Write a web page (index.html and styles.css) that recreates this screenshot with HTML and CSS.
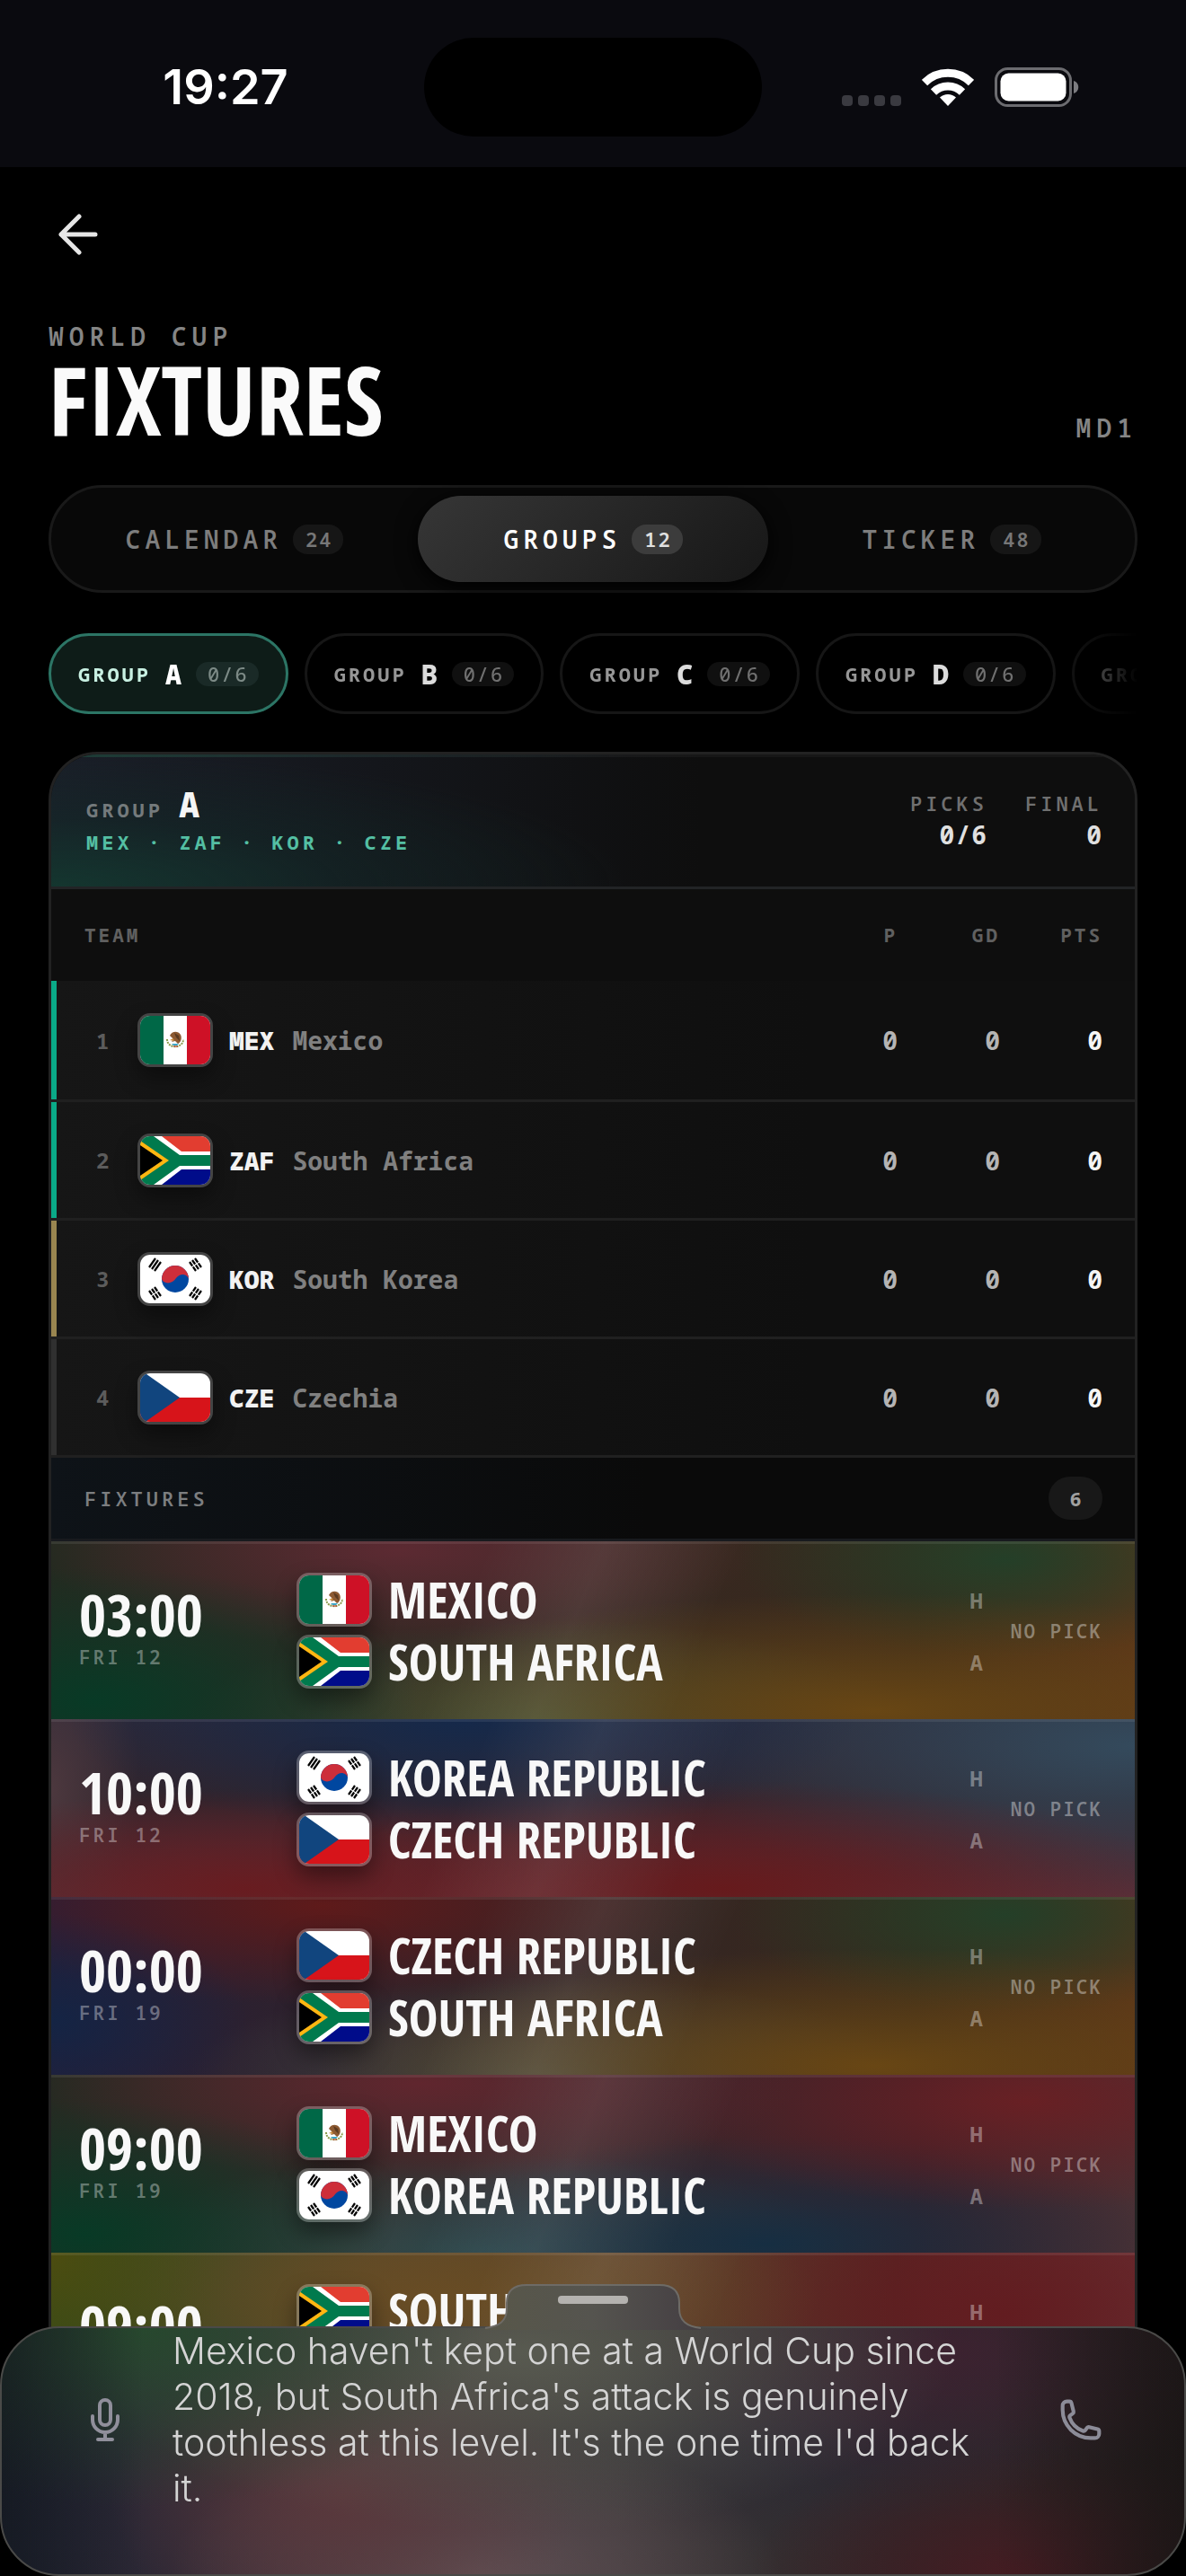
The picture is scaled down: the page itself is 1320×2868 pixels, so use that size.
FILE: index.html
```html
<!DOCTYPE html>
<html lang="en">
<head>
    <meta charset="UTF-8">
    <meta name="viewport" content="width=device-width, initial-scale=1.0">
    <title>World Cup Fixtures</title>
    <link rel="stylesheet" href="styles.css">
</head>
<body>
    <!-- flag and emblem shapes, reused below -->
    <svg class="defs" aria-hidden="true">
        <symbol id="flag-mex" viewBox="0 0 78 54" preserveAspectRatio="none">
            <rect width="78" height="54" fill="#fff"/>
            <rect width="26" height="54" fill="#006847"/>
            <rect x="52" width="26" height="54" fill="#ce1126"/>
            <path d="M30 26c0 11 18 11 18 0" fill="none" stroke="#8a9a4a" stroke-width="2" stroke-dasharray="2 1"/>
            <path d="M33 22c2-5 9-6 12-1 2 4 0 9-3 10l-3-3-4 1c2-2 2-4 0-5z" fill="#8c5a32"/>
            <path d="M38 19l5 3 1 6-4-4z" fill="#5a3a20"/>
            <path d="M35 31h8l-2 2h-4z" fill="#3aa6c8"/>
            <path d="M33 27l4-2 1 3z" fill="#c98a3a"/>
            <path d="M37 34h5" stroke="#c0392b" stroke-width="1"/>
        </symbol>
        <symbol id="flag-zaf" viewBox="0 0 78 54" preserveAspectRatio="none">
            <rect width="78" height="54" fill="#fff"/>
            <path d="M24 0h54v17H46z" fill="#e23d30"/>
            <path d="M24 54h54V37H46z" fill="#000c8a"/>
            <path d="M0 0h15l29 21h34v12H44L15 54H0z" fill="#007a4d"/>
            <path d="M0 5l32 22L0 49z" fill="#ffb612"/>
            <path d="M0 10l25 17L0 44z" fill="#000"/>
        </symbol>
        <symbol id="flag-kor" viewBox="0 0 78 54" preserveAspectRatio="none">
            <rect width="78" height="54" fill="#fff"/>
            <circle cx="39" cy="27" r="15" fill="#0047a0"/>
            <path d="M24 27a15 15 0 0 1 30 0c-1-5-9-8-14-1-4 7-14 7-16 1z" fill="#cd2e3a"/>
            <g stroke="#000" stroke-width="2.200" fill="none">
                <path d="M10 14l7-10M13 16l7-10M16 18l7-10"/>
                <path d="M61 4l7 10M58 6l7 10M55 8l7 10" stroke-dasharray="5.500 1.200"/>
                <path d="M10 40l7 10M13 38l7 10M16 36l7 10" stroke-dasharray="5.500 1.200"/>
                <path d="M61 50l7-10M58 48l7-10M55 46l7-10" stroke-dasharray="5.500 1.200"/>
            </g>
        </symbol>
        <symbol id="flag-cze" viewBox="0 0 78 54" preserveAspectRatio="none">
            <rect width="78" height="54" fill="#fff"/>
            <rect y="27" width="78" height="27" fill="#d7141a"/>
            <path d="M0-4l44 31L0 58z" fill="#11457e"/>
        </symbol>
    </svg>

    <div class="status-bar">
        <span class="status-time">19:27</span>
        <span class="island"></span>
        <div class="status-icons">
            <svg width="66" height="44" viewBox="0 0 66 44" fill="#3a3a40">
                <rect y="31" width="12" height="12" rx="4"/>
                <rect x="18" y="31" width="12" height="12" rx="4"/>
                <rect x="36" y="31" width="12" height="12" rx="4"/>
                <rect x="54" y="31" width="12" height="12" rx="4"/>
            </svg>
            <svg class="wifi" width="58" height="44" viewBox="0 0 58 44" fill="none" stroke="#fff" stroke-width="9">
                <path d="M3 17a37 37 0 0 1 52 0"/>
                <path d="M13 27.500a23 23 0 0 1 32 0"/>
                <path d="M29 43l-9-9.500a13 13 0 0 1 18 0z" fill="#fff" stroke="none"/>
            </svg>
            <svg width="94" height="44" viewBox="0 0 94 44">
                <rect x="1.500" y="1.500" width="83" height="41" rx="13" fill="none" stroke="#6c6c70" stroke-width="3"/>
                <rect x="6.500" y="6.500" width="73" height="31" rx="9" fill="#fff"/>
                <path d="M88 15c7 2 7 12 0 14z" fill="#7c7c80"/>
            </svg>
        </div>
    </div>

    <main class="page">
        <button class="back" aria-label="Back">
            <svg width="44" height="46" viewBox="0 0 44 46" fill="none" stroke="#e6e6e6" stroke-width="5" stroke-linecap="round" stroke-linejoin="round">
                <path d="M41 23H3M23 3L3 23l20 20"/>
            </svg>
        </button>

        <header class="page-head">
            <div>
                <p class="eyebrow">WORLD CUP</p>
                <h1>FIXTURES</h1>
            </div>
            <span class="matchday">MD1</span>
        </header>

        <nav class="tabs">
            <button class="tab">CALENDAR <span class="count">24</span></button>
            <button class="tab active">GROUPS <span class="count">12</span></button>
            <button class="tab">TICKER <span class="count">48</span></button>
        </nav>

        <div class="chips">
            <button class="chip active">GROUP <b>A</b> <span class="chip-count">0/6</span></button>
            <button class="chip">GROUP <b>B</b> <span class="chip-count">0/6</span></button>
            <button class="chip">GROUP <b>C</b> <span class="chip-count">0/6</span></button>
            <button class="chip">GROUP <b>D</b> <span class="chip-count">0/6</span></button>
            <button class="chip">GROUP <b>E</b> <span class="chip-count">0/6</span></button>
        </div>

        <section class="card">
            <div class="card-head">
                <div>
                    <h2>GROUP <b>A</b></h2>
                    <p class="codes">MEX · ZAF · KOR · CZE</p>
                </div>
                <dl class="stats">
                    <div><dt>PICKS</dt><dd>0/6</dd></div>
                    <div><dt>FINAL</dt><dd>0</dd></div>
                </dl>
            </div>

            <table class="standings">
                <thead>
                    <tr><th class="team-head" colspan="2">TEAM</th><th class="num">P</th><th class="num">GD</th><th class="num last">PTS</th></tr>
                </thead>
                <tbody>
                    <tr class="through">
                        <td class="rank">1</td>
                        <td><div class="team"><svg class="flag"><use href="#flag-mex"/></svg><b>MEX</b><span>Mexico</span></div></td>
                        <td class="num">0</td><td class="num">0</td><td class="num last">0</td>
                    </tr>
                    <tr class="through">
                        <td class="rank">2</td>
                        <td><div class="team"><svg class="flag"><use href="#flag-zaf"/></svg><b>ZAF</b><span>South Africa</span></div></td>
                        <td class="num">0</td><td class="num">0</td><td class="num last">0</td>
                    </tr>
                    <tr class="playoff">
                        <td class="rank">3</td>
                        <td><div class="team"><svg class="flag"><use href="#flag-kor"/></svg><b>KOR</b><span>South Korea</span></div></td>
                        <td class="num">0</td><td class="num">0</td><td class="num last">0</td>
                    </tr>
                    <tr>
                        <td class="rank">4</td>
                        <td><div class="team"><svg class="flag"><use href="#flag-cze"/></svg><b>CZE</b><span>Czechia</span></div></td>
                        <td class="num">0</td><td class="num">0</td><td class="num last">0</td>
                    </tr>
                </tbody>
            </table>

            <div class="fixtures-head">
                <h3>FIXTURES</h3>
                <span class="total">6</span>
            </div>

            <ul class="fixtures">
                <li class="fixture mex-zaf">
                    <div class="kickoff"><time>03:00</time><span>FRI 12</span></div>
                    <div class="sides">
                        <div class="side"><svg class="flag"><use href="#flag-mex"/></svg>MEXICO</div>
                        <div class="side"><svg class="flag"><use href="#flag-zaf"/></svg>SOUTH AFRICA</div>
                    </div>
                    <div class="home-away"><span>H</span><span>A</span></div>
                    <span class="pick">NO PICK</span>
                </li>
                <li class="fixture kor-cze">
                    <div class="kickoff"><time>10:00</time><span>FRI 12</span></div>
                    <div class="sides">
                        <div class="side"><svg class="flag"><use href="#flag-kor"/></svg>KOREA REPUBLIC</div>
                        <div class="side"><svg class="flag"><use href="#flag-cze"/></svg>CZECH REPUBLIC</div>
                    </div>
                    <div class="home-away"><span>H</span><span>A</span></div>
                    <span class="pick">NO PICK</span>
                </li>
                <li class="fixture cze-zaf">
                    <div class="kickoff"><time>00:00</time><span>FRI 19</span></div>
                    <div class="sides">
                        <div class="side"><svg class="flag"><use href="#flag-cze"/></svg>CZECH REPUBLIC</div>
                        <div class="side"><svg class="flag"><use href="#flag-zaf"/></svg>SOUTH AFRICA</div>
                    </div>
                    <div class="home-away"><span>H</span><span>A</span></div>
                    <span class="pick">NO PICK</span>
                </li>
                <li class="fixture mex-kor">
                    <div class="kickoff"><time>09:00</time><span>FRI 19</span></div>
                    <div class="sides">
                        <div class="side"><svg class="flag"><use href="#flag-mex"/></svg>MEXICO</div>
                        <div class="side"><svg class="flag"><use href="#flag-kor"/></svg>KOREA REPUBLIC</div>
                    </div>
                    <div class="home-away"><span>H</span><span>A</span></div>
                    <span class="pick">NO PICK</span>
                </li>
                <li class="fixture zaf-kor">
                    <div class="kickoff"><time>09:00</time><span>THU 25</span></div>
                    <div class="sides">
                        <div class="side"><svg class="flag"><use href="#flag-zaf"/></svg>SOUTH AFRICA</div>
                        <div class="side"><svg class="flag"><use href="#flag-kor"/></svg>KOREA REPUBLIC</div>
                    </div>
                    <div class="home-away"><span>H</span><span>A</span></div>
                    <span class="pick">NO PICK</span>
                </li>
            </ul>
        </section>
    </main>

    <div class="sheet">
        <button class="handle" aria-label="Expand">
            <svg width="240" height="52" viewBox="0 0 240 52">
                <defs>
                    <linearGradient id="tabfill" x1="0" x2="1">
                        <stop offset="0" stop-color="#585749"/>
                        <stop offset=".5" stop-color="#55544f"/>
                        <stop offset="1" stop-color="#443e42"/>
                    </linearGradient>
                </defs>
                <path d="M0 52V50C16 48 24 42 24 28V22C24 8 32 2 46 2H194C208 2 216 8 216 22V28C216 42 224 48 240 50V52Z" fill="url(#tabfill)"/>
                <path d="M0 50C16 48 24 42 24 28V22C24 8 32 2 46 2H194C208 2 216 8 216 22V28C216 42 224 48 240 50" fill="none" stroke="#6e6b66" stroke-width="2"/>
                <rect x="81" y="14" width="78" height="9" rx="4" fill="#b4b2af"/>
            </svg>
        </button>
        <button class="sheet-btn" aria-label="Microphone">
            <svg width="60" height="60" viewBox="0 0 60 60" fill="none" stroke="#908f9b" stroke-width="4" stroke-linecap="round">
                <rect x="24" y="8" width="12" height="28" rx="6"/>
                <path d="M16 26v4a14 14 0 0 0 28 0v-4M30 44v8M22 52h16"/>
            </svg>
        </button>
        <p class="message">Mexico haven't kept one at a World Cup since 2018, but South Africa's attack is genuinely toothless at this level. It's the one time I'd back it.</p>
        <button class="sheet-btn" aria-label="Call">
            <svg width="50" height="50" viewBox="0 0 24 24" fill="none" stroke="#8c8c98" stroke-width="2" stroke-linejoin="round">
                <path d="M2.250 6.750c0 8.284 6.716 15 15 15h2.250a2.250 2.250 0 0 0 2.250-2.250v-1.372c0-.516-.351-.966-.852-1.091l-4.423-1.106c-.44-.11-.902.055-1.173.417l-.97 1.293c-.282.376-.769.542-1.210.38a12.035 12.035 0 0 1-7.143-7.143c-.162-.441.004-.928.38-1.210l1.293-.97c.363-.271.527-.734.417-1.173L6.963 3.102a1.125 1.125 0 0 0-1.091-.852H4.500A2.250 2.250 0 0 0 2.250 4.500z"/>
            </svg>
        </button>
    </div>
</body>
</html>
```
FILE: styles.css
```css
* {
    box-sizing: border-box;
    margin: 0;
    padding: 0;
}
body {
    height: 100vh;
    overflow: hidden;
    background: #000;
    color: #fff;
    font-family: "Noto Sans Mono", "DejaVu Sans Mono", monospace;
    font-weight: 700;
}
button {
    background: none;
    border: none;
    color: inherit;
    font: inherit;
    cursor: pointer;
}
svg {
    display: block;
}
.defs {
    position: absolute;
    width: 0;
    height: 0;
}

/* status bar */
.status-bar {
    display: grid;
    grid-template-columns: 1fr 376px 1fr;
    align-items: center;
    height: 186px;
    padding-top: 8px;
    background: #0a0a0f;
}
.status-time {
    padding-left: 30px;
    text-align: center;
    font: 600 54px/60px Inter, sans-serif;
}
.island {
    height: 110px;
    border-radius: 55px;
    background: #000;
}
.status-icons {
    display: flex;
    gap: 23px;
    padding-left: 89px;
}

/* page head */
.page {
    padding: 0 54px;
}
.back {
    display: flex;
    align-items: center;
    height: 60px;
    margin-top: 45px;
    padding: 0 11px;
}
.page-head {
    display: flex;
    justify-content: space-between;
    align-items: flex-end;
    margin-top: 65px;
}
.eyebrow,
.matchday {
    color: #858585;
    font-size: 28px;
    font-weight: 600;
    line-height: 36px;
    letter-spacing: 6px;
}
.matchday {
    line-height: 40px;
}
h1 {
    font: 700 106px/104px "Open Sans Condensed", "Roboto Condensed", "Open Sans", sans-serif;
    color: #fafafa;
}

/* tabs */
.tabs {
    display: grid;
    grid-template-columns: repeat(3, 1fr);
    gap: 9px;
    margin-top: 44px;
    padding: 9px;
    border: 3px solid #191919;
    border-radius: 60px;
    background: #080808;
}
.tab {
    display: flex;
    align-items: center;
    justify-content: center;
    gap: 12px;
    height: 96px;
    border-radius: 48px;
    color: #7d7d7d;
    font-size: 28px;
    font-weight: 600;
    letter-spacing: 5px;
}
.tab.active {
    background: linear-gradient(135deg, #363636, #171717);
    box-shadow: 0 6px 24px #000;
    color: #fff;
}
.count {
    padding: 0 12px 0 14px;
    border-radius: 16px;
    background: #161616;
    color: #777;
    font-size: 22px;
    line-height: 33px;
    letter-spacing: 2px;
}
.active .count {
    background: #3c3c3c;
    color: #e0e0e0;
}

/* group chips */
.chips {
    display: flex;
    gap: 18px;
    margin-top: 45px;
    overflow: hidden;
    -webkit-mask-image: linear-gradient(90deg, #000 92%, transparent);
    mask-image: linear-gradient(90deg, #000 92%, transparent);
}
.chip {
    display: flex;
    flex: none;
    align-items: center;
    height: 90px;
    padding: 0 30px;
    border: 3px solid #161616;
    border-radius: 45px;
    color: #969696;
    font-size: 22px;
    letter-spacing: 3px;
}
.chip b {
    margin: 0 16px;
    color: #dcdcdc;
    font-size: 30px;
    letter-spacing: 0;
}
.chip.active {
    border-color: #2c7565;
    background: #0e1c18;
    color: #c8f0e2;
}
.chip.active b {
    color: #fff;
}
.chip-count {
    padding: 0 11px 0 13px;
    border-radius: 14px;
    background: #101010;
    color: #707070;
    font-size: 22px;
    font-weight: 500;
    line-height: 27px;
    letter-spacing: 2px;
}
.active .chip-count {
    background: #1a2a27;
    color: #7c8a86;
}

/* group card */
.card {
    margin-top: 42px;
    border: 3px solid #222;
    border-radius: 54px;
    background: #0e0e0e;
    overflow: hidden;
}
.card-head {
    display: flex;
    justify-content: space-between;
    align-items: center;
    height: 150px;
    padding: 0 36px 4px 39px;
    border-top: 3px solid rgba(255, 255, 255, 0.04);
    border-bottom: 3px solid #222426;
    background:
        radial-gradient(ellipse 640px 150px at 0 100%, #14362f, rgba(18, 42, 40, 0.5) 50%, transparent),
        linear-gradient(90deg, #1a1e28, #0e0e0e 60%);
}
h2 {
    color: #747a7c;
    font-size: 22px;
    letter-spacing: 4px;
    line-height: 42px;
}
h2 b {
    color: #f5f5f5;
    font-size: 38px;
    letter-spacing: 0;
}
.codes {
    color: #54bfa3;
    font-size: 22px;
    line-height: 30px;
    letter-spacing: 4px;
}
.stats {
    display: flex;
    gap: 42px;
    text-align: right;
}
.stats dt {
    color: #707070;
    font-size: 22px;
    font-weight: 600;
    line-height: 32px;
    letter-spacing: 4px;
}
.stats dd {
    color: #e0e0e0;
    font-size: 28px;
    line-height: 38px;
    letter-spacing: 1px;
}

/* standings */
.standings {
    width: 100%;
    border-spacing: 0;
}
.standings th {
    height: 102px;
    color: #606060;
    font-size: 21px;
    letter-spacing: 3px;
}
.standings .team-head {
    padding-left: 37px;
    text-align: left;
}
.standings tbody tr {
    background: linear-gradient(90deg, #161616, #0f0f0f 70%);
    box-shadow: inset 6px 0 #303030;
}
.standings tbody .through {
    box-shadow: inset 6px 0 #0aaa88;
}
.standings tbody .playoff {
    box-shadow: inset 6px 0 #9a8650;
}
.standings td {
    height: 132px;
    border-bottom: 3px solid #202020;
}
.standings tbody tr:first-child td {
    height: 135px;
}
.rank {
    width: 96px;
    padding-left: 50px;
    color: #5c5c5c;
    font-size: 24px;
}
.team {
    display: flex;
    align-items: center;
    color: #808080;
    font-size: 28px;
}
.team b {
    margin: 0 20px 0 18px;
    color: #f2f2f2;
}
.flag {
    width: 84px;
    height: 60px;
    border: 3px solid #444;
    border-radius: 14px;
    box-shadow: 0 12px 24px rgba(0, 0, 0, 0.4);
}
.standings .num {
    width: 114px;
    text-align: right;
}
.standings .last {
    width: 150px;
    padding-right: 36px;
}
td.num {
    color: #b4b4b4;
    font-size: 28px;
}
td.last {
    color: #f5f5f5;
}

/* fixtures */
.fixtures-head {
    display: flex;
    justify-content: space-between;
    align-items: center;
    height: 93px;
    padding: 0 36px 0 37px;
    border-bottom: 3px solid #181a1e;
    background: linear-gradient(90deg, #0e1318, #0a0a0a 55%);
}
h3 {
    color: #7c7e80;
    font-size: 22px;
    font-weight: 600;
    letter-spacing: 4px;
}
.total {
    width: 60px;
    border-radius: 24px;
    background: #181818;
    color: #a0a0a0;
    font-size: 22px;
    line-height: 48px;
    text-align: center;
}
.fixtures {
    list-style: none;
}
.fixture {
    display: flex;
    align-items: center;
    height: 198px;
    padding: 0 36px 2px 31px;
    border-top: 3px solid rgba(255, 255, 255, 0.08);
    background-origin: border-box;
}
.kickoff {
    width: 242px;
    padding-bottom: 8px;
}
.kickoff time {
    display: block;
    font: 700 65px/66px "Open Sans Condensed", "Roboto Condensed", "Open Sans", sans-serif;
    color: #f8f8f8;
}
.kickoff span {
    display: block;
    color: rgba(255, 255, 255, 0.36);
    font-size: 21px;
    font-weight: 600;
    line-height: 30px;
    letter-spacing: 3px;
}
.sides,
.home-away {
    display: grid;
    grid-template-rows: 60px 60px;
    gap: 9px;
    align-items: center;
}
.sides {
    flex: 1;
}
.side {
    display: flex;
    align-items: center;
    gap: 18px;
    font: 700 55px/60px "Open Sans Condensed", "Roboto Condensed", "Open Sans", sans-serif;
    color: #f8f8f8;
}
.side .flag {
    border-color: rgba(255, 255, 255, 0.25);
}
.home-away {
    margin-right: 31px;
    color: rgba(255, 255, 255, 0.36);
    font-size: 24px;
}
.pick {
    color: rgba(255, 255, 255, 0.38);
    font-size: 21px;
    font-weight: 600;
    letter-spacing: 2px;
}

/* blurred flag colours behind each fixture */
.mex-zaf {
    background-image:
        linear-gradient(112deg, transparent 38%, rgba(255, 255, 255, 0.08) 48%, transparent 60%),
        radial-gradient(ellipse 360px 150px at 4% 90%, #083a26, transparent),
        radial-gradient(ellipse 400px 110px at 32% 5%, #5c2a32, transparent),
        radial-gradient(ellipse 620px 130px at 76% 95%, #684614, transparent),
        radial-gradient(ellipse 300px 110px at 88% 10%, #243f28, transparent),
        radial-gradient(ellipse 400px 110px at 46% 100%, #3a5038, transparent),
        linear-gradient(90deg, #242a20, #362824 40%, #38291c 80%, #58341a);
}
.kor-cze {
    background-image:
        linear-gradient(112deg, transparent 38%, rgba(255, 255, 255, 0.08) 48%, transparent 60%),
        radial-gradient(ellipse 440px 130px at 38% 0, #15294a, transparent),
        radial-gradient(ellipse 420px 110px at 18% 95%, #681c20, transparent),
        radial-gradient(ellipse 520px 120px at 62% 95%, #661a1c, transparent),
        radial-gradient(ellipse 560px 170px at 100% 15%, #344a5c, transparent),
        radial-gradient(ellipse 100px 200px at 0 40%, #4c383e, transparent),
        linear-gradient(180deg, #2c2838, #30242c 45%, #58303a);
}
.cze-zaf {
    background-image:
        linear-gradient(112deg, transparent 38%, rgba(255, 255, 255, 0.08) 48%, transparent 60%),
        radial-gradient(ellipse 220px 120px at 0 70%, #142444, transparent),
        radial-gradient(ellipse 420px 110px at 25% 5%, #5e1a1a, transparent),
        radial-gradient(ellipse 620px 130px at 76% 95%, #684614, transparent),
        radial-gradient(ellipse 300px 110px at 88% 10%, #243f28, transparent),
        radial-gradient(ellipse 400px 110px at 46% 100%, #444a46, transparent),
        linear-gradient(90deg, #261e38, #30222a 30%, #38291c 80%, #58341a);
}
.mex-kor {
    background-image:
        linear-gradient(112deg, transparent 38%, rgba(255, 255, 255, 0.08) 48%, transparent 60%),
        radial-gradient(ellipse 340px 150px at 3% 90%, #083a26, transparent),
        radial-gradient(ellipse 420px 110px at 34% 5%, #60262e, transparent),
        radial-gradient(ellipse 420px 120px at 90% 15%, #682024, transparent),
        radial-gradient(ellipse 460px 120px at 66% 95%, #162e42, transparent),
        radial-gradient(ellipse 420px 110px at 40% 100%, #34504e, transparent),
        linear-gradient(90deg, #262a22, #3c2a2c 40%, #3a2028 80%, #4a3034);
}
.zaf-kor {
    background-image:
        linear-gradient(112deg, transparent 38%, rgba(255, 255, 255, 0.08) 48%, transparent 60%),
        radial-gradient(ellipse 200px 200px at 0 0, #4c4c10, transparent),
        radial-gradient(ellipse 420px 130px at 36% 25%, #684c24, transparent),
        radial-gradient(ellipse 320px 180px at 88% 35%, #621c20, transparent),
        linear-gradient(90deg, #2c4a1c, #58482a 30%, #5e402c 55%, #562422 78%, #682e32);
}

/* bottom sheet */
.sheet {
    position: fixed;
    left: 0;
    right: 0;
    bottom: 0;
    display: flex;
    justify-content: space-between;
    align-items: center;
    gap: 45px;
    padding: 0 85px 70px;
    border: 2px solid #4a4a48;
    border-radius: 66px;
    background:
        linear-gradient(90deg, rgba(16, 20, 24, 0.6), transparent 12%, transparent 84%, rgba(24, 20, 20, 0.8)),
        radial-gradient(ellipse 380px 200px at 12% 0, #27482e, transparent),
        radial-gradient(ellipse 480px 200px at 44% 10%, #585a50, transparent),
        radial-gradient(ellipse 260px 180px at 29% 68%, #5a383c, transparent),
        radial-gradient(ellipse 340px 160px at 40% 100%, #605054, transparent),
        radial-gradient(ellipse 340px 160px at 80% 10%, #3c2230, transparent),
        radial-gradient(ellipse 300px 140px at 86% 100%, #451c22, transparent),
        radial-gradient(ellipse 300px 160px at 68% 35%, #2c2a36, transparent),
        linear-gradient(90deg, #1f2434, #3a2c36 25%, #3c383a 52%, #2c282a 75%, #282020);
}
.handle {
    position: absolute;
    left: 50%;
    bottom: 100%;
    margin: 0 0 -2px -120px;
}
.sheet-btn {
    display: flex;
    flex: none;
    align-items: center;
    justify-content: center;
    width: 60px;
    height: 60px;
}
.message {
    flex: 1;
    padding-right: 20px;
    color: #d4d4d4;
    font: 300 41px/51px Inter, sans-serif;
}
```
